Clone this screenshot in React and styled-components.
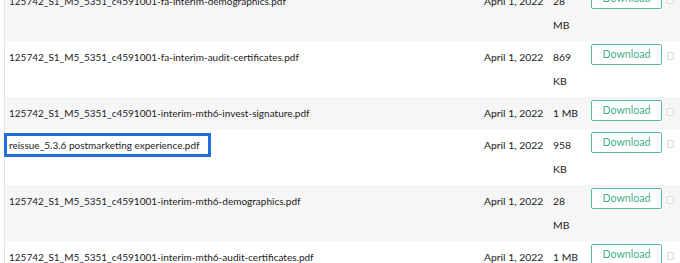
import React from "react";
import styled, { createGlobalStyle } from "styled-components";

const GlobalStyle = createGlobalStyle`
  html, body {
    margin: 0;
    padding: 0;
    background: #fff;
    overflow: hidden;
  }
  body {
    font-family: Lato, "Open Sans", "Liberation Sans", sans-serif;
    color: #222;
  }
`;

const files = [
  { name: "125742_S1_M5_5351_c4591001-fa-interim-demographics.pdf", date: "April 1, 2022", size: "28 MB" },
  { name: "125742_S1_M5_5351_c4591001-fa-interim-audit-certificates.pdf", date: "April 1, 2022", size: "869 KB" },
  { name: "125742_S1_M5_5351_c4591001-interim-mth6-invest-signature.pdf", date: "April 1, 2022", size: "1 MB" },
  { name: "reissue_5.3.6 postmarketing experience.pdf", date: "April 1, 2022", size: "958 KB", marked: true },
  { name: "125742_S1_M5_5351_c4591001-interim-mth6-demographics.pdf", date: "April 1, 2022", size: "28 MB" },
  { name: "125742_S1_M5_5351_c4591001-interim-mth6-audit-certificates.pdf", date: "April 1, 2022", size: "1 MB" },
];

export default function App() {
  return (
    <>
      <GlobalStyle />
      <Table>
        {files.map((f, i) => (
          <Row key={i} $shaded={i % 2 === 0}>
            <NameCell>
              <FileName $marked={f.marked}>{f.name}</FileName>
            </NameCell>
            <DateCell>{f.date}</DateCell>
            <SizeCell>{f.size}</SizeCell>
            <ActionCell>
              <DownloadButton>Download</DownloadButton>
            </ActionCell>
            <CheckCell>
              <Check />
            </CheckCell>
          </Row>
        ))}
      </Table>
    </>
  );
}

const Table = styled.div`
  width: 680px;
  margin-top: -15px;
  padding-left: 4px;
  box-sizing: border-box;
`;

const Row = styled.div`
  display: grid;
  grid-template-columns: 1fr 69px 38px 76px 13px;
  align-items: start;
  padding: 4px 0;
  background: ${(p) => (p.$shaded ? "#f6f6f6" : "#ffffff")};
  border-left: 1px solid #e4e4e4;
  font-size: 10.4px;
  line-height: 24px;
`;

const NameCell = styled.div`
  min-width: 0;
  font-size: 10px;
`;

const FileName = styled.span`
  display: inline-block;
  line-height: 18px;
  padding: 0 8px 0 2px;
  margin-left: -1px;
  border: 3px solid ${(p) => (p.$marked ? "#1f6fd8" : "transparent")};
  white-space: nowrap;
`;

const DateCell = styled.div`
  white-space: nowrap;
`;

const SizeCell = styled.div`
  width: 30px;
`;

const ActionCell = styled.div``;

const DownloadButton = styled.button`
  display: flex;
  align-items: center;
  justify-content: center;
  width: 71px;
  height: 21px;
  box-sizing: border-box;
  padding: 0 0 1px;
  margin-top: -1px;
  background: #fff;
  border: 1.5px solid #55bd9f;
  border-radius: 2px;
  color: #3fb08e;
  font-family: Lato, "Open Sans", "Liberation Sans", sans-serif;
  font-size: 10.6px;
  line-height: 1;
`;

const CheckCell = styled.div`
  padding-top: 7px;
`;

const Check = styled.span`
  display: block;
  width: 5px;
  height: 6px;
  border: 1px solid #d8d8d8;
  border-radius: 1px;
  background: #fdfdfd;
`;
